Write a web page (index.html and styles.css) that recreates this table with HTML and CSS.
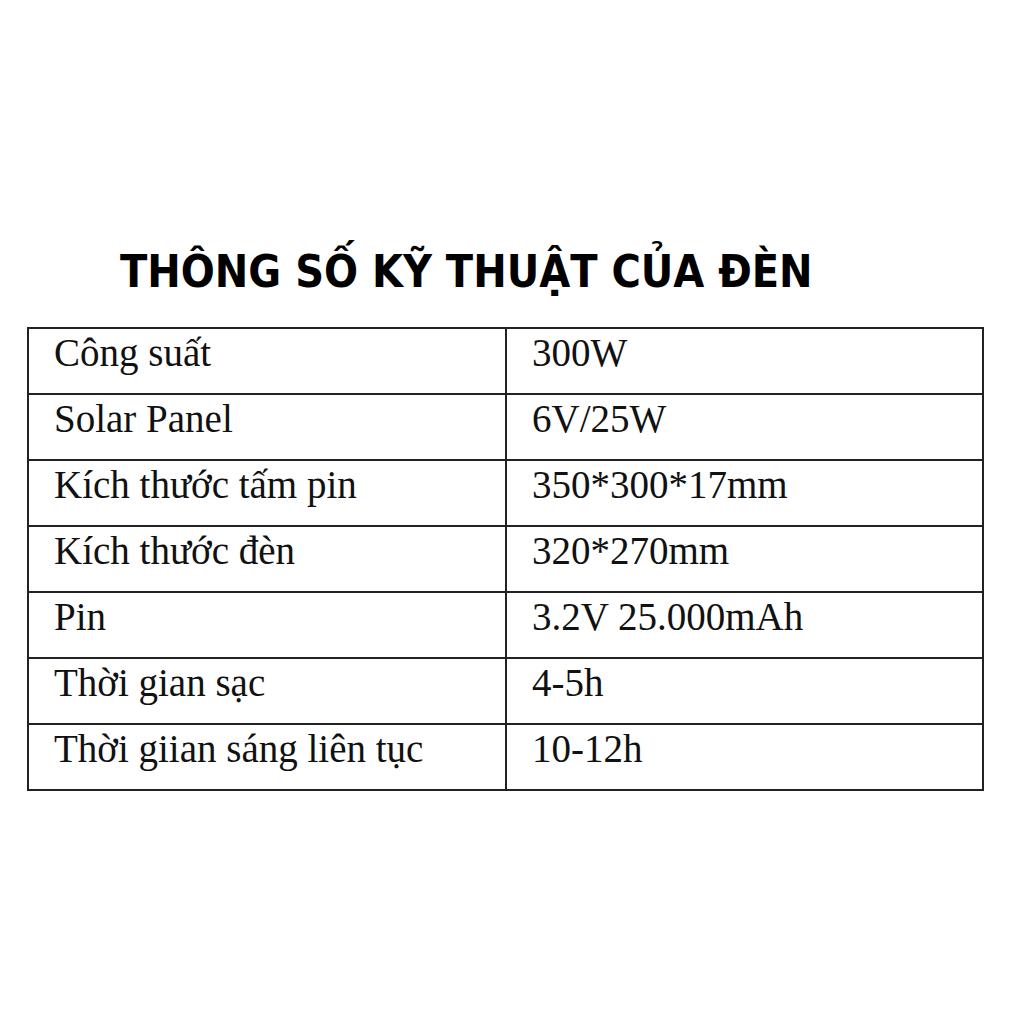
FILE: index.html
```html
<!DOCTYPE html>
<html lang="vi">
<head>
<meta charset="utf-8">
<link rel="stylesheet" href="styles.css">
</head>
<body>
<div class="page">
  <h1 class="title">THÔNG SỐ KỸ THUẬT CỦA ĐÈN</h1>
  <table class="spec">
    <tr><td>Công suất</td><td>300W</td></tr>
    <tr><td>Solar Panel</td><td>6V/25W</td></tr>
    <tr><td>Kích thước tấm pin</td><td>350*300*17mm</td></tr>
    <tr><td>Kích thước đèn</td><td>320*270mm</td></tr>
    <tr><td>Pin</td><td>3.2V 25.000mAh</td></tr>
    <tr><td>Thời gian sạc</td><td>4-5h</td></tr>
    <tr><td>Thời giian sáng liên tục</td><td>10-12h</td></tr>
  </table>
</div>
</body>
</html>
```
FILE: styles.css
```css
html, body {
  margin: 0;
  padding: 0;
  background: #fff;
}
.page {
  width: 1024px;
  height: 1024px;
  padding-top: 244px;
  box-sizing: border-box;
}
.title {
  margin: 0 0 0 120px;
  font-family: "DejaVu Sans Condensed", "DejaVu Sans", sans-serif;
  font-stretch: condensed;
  font-weight: bold;
  font-size: 44.5px;
  line-height: 56px;
  color: #000;
  white-space: nowrap;
}
.spec {
  margin: 27px 0 0 27px;
  width: 957px;
  border-collapse: collapse;
  font-family: "Liberation Serif", "Times New Roman", serif;
  font-size: 39px;
  color: #111;
}
.spec td {
  border: 2px solid #222;
  height: 66px;
  padding: 0 0 0 25px;
  vertical-align: top;
  line-height: 48px;
  box-sizing: border-box;
}
.spec td:first-child {
  width: 478px;
}
```
